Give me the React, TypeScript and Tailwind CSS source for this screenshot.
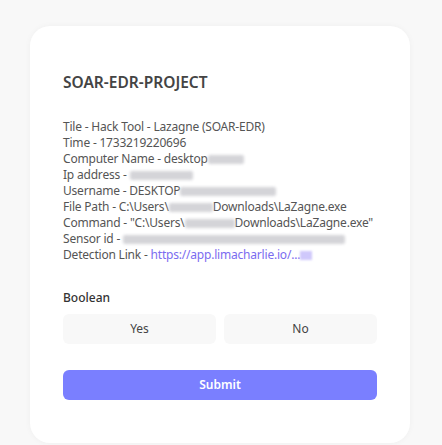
import React from 'react';

const Blur: React.FC<{ w: number }> = ({ w }) => (
  <span
    className="inline-block h-[9px] align-[-1px] rounded-[2px] bg-[#d4d4d8] blur-[1.5px]"
    style={{ width: w }}
  />
);

const App: React.FC = () => {
  return (
    <div className="min-h-[445px] bg-[#f8f8f8] pt-[26px] pl-[30px] font-['Noto_Sans',sans-serif]">
      <div className="w-[380px] h-[417px] bg-white rounded-[20px] shadow-[0_0_6px_rgba(0,0,0,0.04)] px-[33px] pt-[44px]">
        <h1 className="text-[15.5px] font-semibold text-[#444] leading-[24px]">SOAR-EDR-PROJECT</h1>

        <div className="mt-[25px] text-[12px] leading-[16px] tracking-[-0.2px] text-[#555] whitespace-nowrap">
          <div>Tile - Hack Tool - Lazagne (SOAR-EDR)</div>
          <div>Time - 1733219220696</div>
          <div>Computer Name - desktop<Blur w={36} /></div>
          <div>Ip address - <Blur w={63} /></div>
          <div>Username - DESKTOP<Blur w={96} /></div>
          <div>File Path - C:\Users\<Blur w={44} />Downloads\LaZagne.exe</div>
          <div>Command - "C:\Users\<Blur w={50} />Downloads\LaZagne.exe"</div>
          <div>Sensor id - <Blur w={222} /></div>
          <div>
            Detection Link - <span className="text-[#7b6cf0]">https://app.limacharlie.io/...</span>
            <span className="inline-block w-[12px] h-[9px] align-[-1px] bg-[#cfc8fb] blur-[1px]" />
          </div>
        </div>

        <div className="mt-[27px] text-[12px] font-medium text-[#333] leading-[16px]">Boolean</div>
        <div className="mt-[8px] grid grid-cols-2 gap-[8px]">
          <button className="h-[30px] rounded-[6px] bg-[#f8f8f8] text-[12px] text-[#444]">Yes</button>
          <button className="h-[30px] rounded-[6px] bg-[#f8f8f8] text-[12px] text-[#444]">No</button>
        </div>

        <button className="mt-[26px] w-full h-[30px] rounded-[6px] bg-[#7a7fff] text-white text-[12px] font-semibold">
          Submit
        </button>
      </div>
    </div>
  );
};

export default App;
